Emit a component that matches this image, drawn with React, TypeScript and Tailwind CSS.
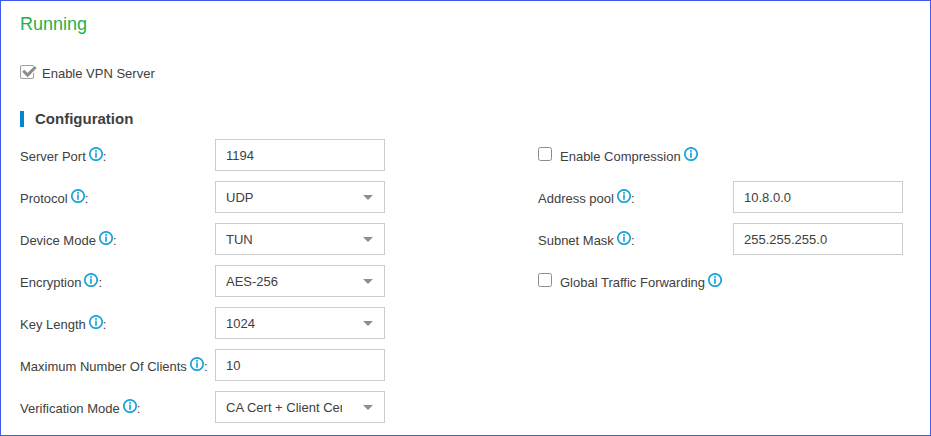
import React from "react";

function Info() {
  return (
    <svg className="block h-[14px] w-[14px] shrink-0" viewBox="0 0 14 14" fill="none">
      <circle cx="7" cy="7" r="6.2" stroke="#1ba5d6" strokeWidth="1.7" />
      <path d="M6 3.1h2v1.6H6zM6 5.5h2v5.2H6z" fill="#3cb2dc" />
    </svg>
  );
}

function Label({ text }: { text: string }) {
  return (
    <div className="flex w-[195px] shrink-0 items-center whitespace-nowrap">
      <span className="pt-[4px]">{text}</span>
      <span className="ml-[3px] pb-[2px]"><Info /></span>
      <span className="pt-[4px]">:</span>
    </div>
  );
}

function Field({ label, value, select }: { label: string; value: string; select?: boolean }) {
  return (
    <div className="flex h-8 items-center">
      <Label text={label} />
      <div className="flex h-8 w-[170px] items-center justify-between border border-[#ccc] pl-[10px] pr-[11px]">
        <span className="w-[116px] overflow-hidden whitespace-nowrap pt-[2px]">{value}</span>
        {select && <span className="mt-px border-x-[5px] border-t-[5px] border-x-transparent border-t-[#928c8c]" />}
      </div>
    </div>
  );
}

function Check({ text }: { text: string }) {
  return (
    <div className="flex h-8 items-center">
      <span className="mb-[2px] h-[14px] w-[14px] rounded-[2.5px] border border-[#8c8c8c]" />
      <span className="ml-2 mr-[3px] pt-[4px]">{text}</span>
      <span className="pb-[2px]"><Info /></span>
    </div>
  );
}

export default function App() {
  return (
    <div className="h-[436px] w-[931px] overflow-hidden border border-[#3f5bf0] bg-white pl-[19px] font-['Liberation_Sans',Arial,sans-serif] text-[13px] text-[#404040]">
      <h1 className="mt-[10px] h-[26px] text-[18px] leading-[26px] text-[#22b14c]">Running</h1>
      <div className="mt-[26px] flex h-5 items-center">
        <svg className="h-[16px] w-[17px]" viewBox="0 0 17 16" fill="none">
          <path d="M13.5 8v4a1.5 1.5 0 0 1-1.5 1.5H2A1.5 1.5 0 0 1 .5 12V2A1.5 1.5 0 0 1 2 .5h10a1.5 1.5 0 0 1 1.3.8" stroke="#a0a0a0" strokeWidth="1.1" />
          <path d="M3.2 5.8l4.4 4.3L15.6 2" stroke="#8c8c8c" strokeWidth="3" />
        </svg>
        <span className="ml-[5px] pt-[2px]">Enable VPN Server</span>
      </div>
      <div className="mt-[28px] flex h-4 items-center">
        <span className="h-4 w-1 bg-[#0087d0]" />
        <h2 className="ml-[11px] text-[15px] font-bold">Configuration</h2>
      </div>
      <div className="mt-[12px] flex">
        <div className="flex w-[518px] flex-col gap-[10px]">
          <Field label="Server Port" value="1194" />
          <Field label="Protocol" value="UDP" select />
          <Field label="Device Mode" value="TUN" select />
          <Field label="Encryption" value="AES-256" select />
          <Field label="Key Length" value="1024" select />
          <Field label="Maximum Number Of Clients" value="10" />
          <Field label="Verification Mode" value="CA Cert + Client Cert" select />
        </div>
        <div className="flex flex-col gap-[10px]">
          <Check text="Enable Compression" />
          <Field label="Address pool" value="10.8.0.0" />
          <Field label="Subnet Mask" value="255.255.255.0" />
          <Check text="Global Traffic Forwarding" />
        </div>
      </div>
    </div>
  );
}
